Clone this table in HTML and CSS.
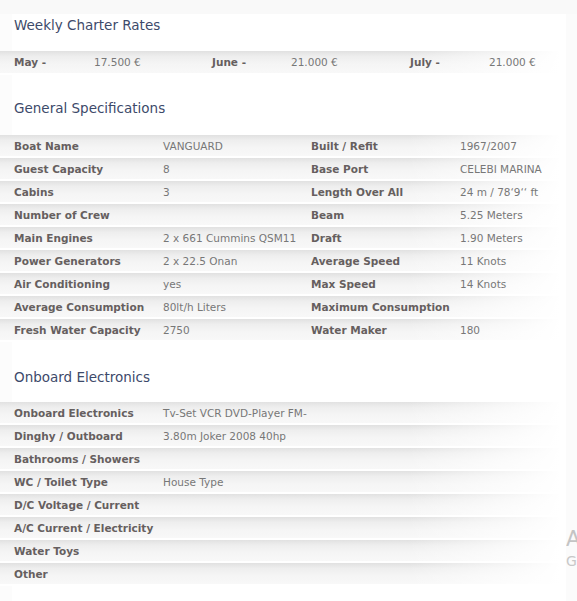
FILE: index.html
```html
<!DOCTYPE html>
<html>
<head>
<meta charset="utf-8">
<link rel="stylesheet" href="styles.css">
</head>
<body>
<div class="topbar"></div>
<div class="page">
  <main class="main">
    <h2 class="heading h-rates">Weekly Charter Rates</h2>
    <div class="row rates">
      <b>May -</b><span>17.500 €</span>
      <b>June -</b><span>21.000 €</span>
      <b>July -</b><span>21.000 €</span>
    </div>

    <h2 class="heading h-spec">General Specifications</h2>
    <div class="rows">
      <div class="row spec"><b>Boat Name</b><span>VANGUARD</span><b>Built / Refit</b><span>1967/2007</span></div>
      <div class="row spec"><b>Guest Capacity</b><span>8</span><b>Base Port</b><span>CELEBI MARINA</span></div>
      <div class="row spec"><b>Cabins</b><span>3</span><b>Length Over All</b><span>24 m / 78‘9‘‘ ft</span></div>
      <div class="row spec"><b>Number of Crew</b><span></span><b>Beam</b><span>5.25 Meters</span></div>
      <div class="row spec"><b>Main Engines</b><span>2 x 661 Cummins QSM11</span><b>Draft</b><span>1.90 Meters</span></div>
      <div class="row spec"><b>Power Generators</b><span>2 x 22.5 Onan</span><b>Average Speed</b><span>11 Knots</span></div>
      <div class="row spec"><b>Air Conditioning</b><span>yes</span><b>Max Speed</b><span>14 Knots</span></div>
      <div class="row spec"><b>Average Consumption</b><span>80lt/h Liters</span><b>Maximum Consumption</b><span></span></div>
      <div class="row spec"><b>Fresh Water Capacity</b><span>2750</span><b>Water Maker</b><span>180</span></div>
    </div>

    <h2 class="heading h-elec">Onboard Electronics</h2>
    <div class="rows">
      <div class="row elec"><b>Onboard Electronics</b><span>Tv-Set VCR DVD-Player FM-</span></div>
      <div class="row elec"><b>Dinghy / Outboard</b><span>3.80m Joker 2008 40hp</span></div>
      <div class="row elec"><b>Bathrooms / Showers</b><span></span></div>
      <div class="row elec"><b>WC / Toilet Type</b><span>House Type</span></div>
      <div class="row elec"><b>D/C Voltage / Current</b><span></span></div>
      <div class="row elec"><b>A/C Current / Electricity</b><span></span></div>
      <div class="row elec"><b>Water Toys</b><span></span></div>
      <div class="row elec"><b>Other</b><span></span></div>
    </div>
  </main>
  <aside class="side">
    <div class="side-title">A</div>
    <div class="side-sub">G</div>
  </aside>
</div>
</body>
</html>
```
FILE: styles.css
```css
html, body {
  margin: 0;
  padding: 0;
}
body {
  background: #ffffff;
  font-family: "DejaVu Sans", Verdana, sans-serif;
  width: 577px;
  height: 601px;
  overflow: hidden;
}
.topbar {
  height: 14px;
  background: #f9f9f9;
}
.page {
  display: flex;
  align-items: stretch;
  height: 587px;
}
.main {
  width: 566px;
  flex: none;
  background: linear-gradient(to right, #fcfcfc 0, #fcfcfc 12px, #ffffff 12px);
}
.side {
  flex: 1;
  background: #fbfbfb;
  overflow: hidden;
  white-space: nowrap;
  padding-top: 513px;
}
.side-title {
  font-size: 21px;
  color: #c4c4c4;
  line-height: 24px;
}
.side-sub {
  font-size: 14px;
  color: #c8c8c8;
  line-height: 20px;
}
.heading {
  margin: 0;
  padding: 0 0 0 14px;
  font-weight: normal;
  font-size: 13.5px;
  color: #3d4a6a;
  line-height: 22px;
  height: 22px;
}
.h-rates {
  margin-bottom: 15px;
}
.h-spec {
  margin-top: 22px;
  margin-bottom: 16px;
}
.h-elec {
  margin-top: 24px;
  margin-bottom: 14px;
}
.row {
  display: grid;
  align-items: center;
  height: 21px;
  padding-left: 14px;
  font-size: 10.5px;
  color: #777;
  white-space: nowrap;
  background:
    linear-gradient(to right, rgba(255,255,255,0) 72%, #ffffff 99%),
    linear-gradient(to bottom, #e1e1e1 0, #eeeeee 25%, #f5f5f5 60%, #f8f8f8 100%);
  border-bottom: 2px solid #ffffff;
}
.row b {
  color: #665f5f;
  font-weight: bold;
}
.rates {
  grid-template-columns: 80px 118px 79px 119px 79px 1fr;
  height: 22px;
}
.spec {
  grid-template-columns: 149px 148px 149px 1fr;
}
.elec {
  grid-template-columns: 149px 1fr;
}
```
